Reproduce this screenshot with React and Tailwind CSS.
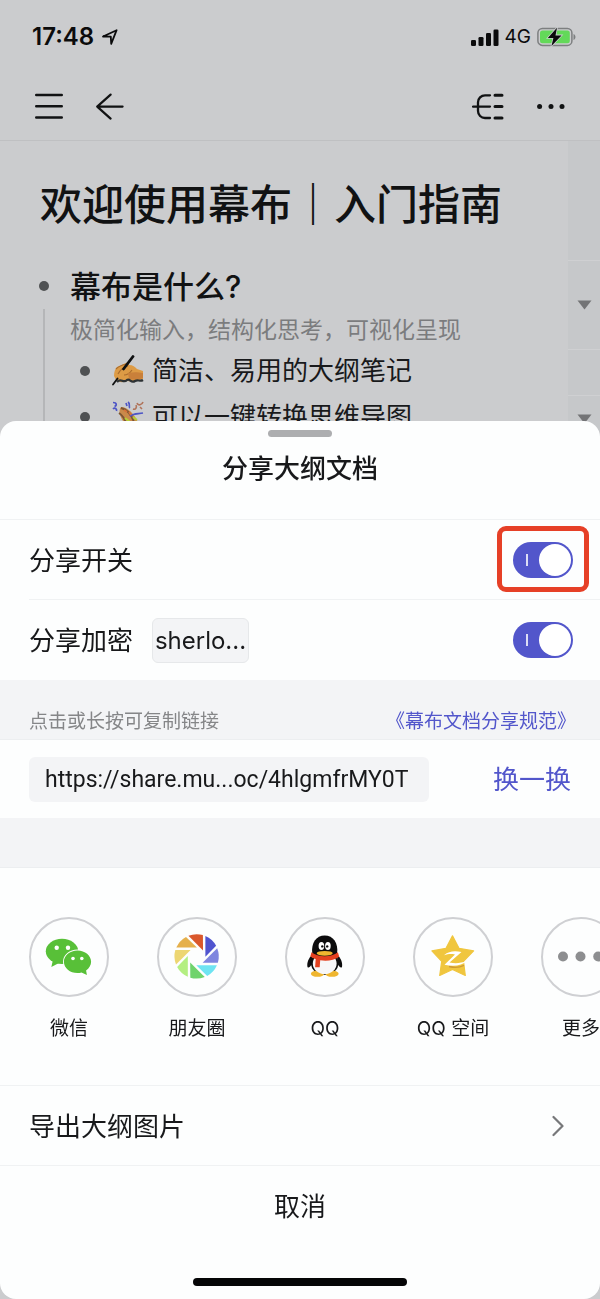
import React, { useState } from 'react';

const StatusBar = () => (
  <div className="flex h-[74px] items-center justify-between pl-8 pr-6">
    <div className="flex items-center gap-2">
      <span className="text-2xl font-semibold text-[#0b0b0c]">17:48</span>
      <svg className="h-4 w-4" viewBox="0 0 16 16" fill="none" stroke="#0b0b0c" strokeWidth="1.8" strokeLinejoin="round">
        <path d="M1 7.5 14.6 1.2 9.2 14.8 8.8 7.6Z" />
      </svg>
    </div>
    <div className="flex items-center gap-1.5">
      <svg className="h-[17px] w-7" viewBox="0 0 28 17" fill="#0b0b0c">
        <rect x="0" y="11" width="5" height="6" rx="1.3" />
        <rect x="7.5" y="8" width="5" height="9" rx="1.3" />
        <rect x="15" y="4" width="5" height="13" rx="1.3" />
        <rect x="22.5" y="0.5" width="5" height="16.5" rx="1.3" />
      </svg>
      <span className="text-[19px] leading-6 text-[#0b0b0c]">4G</span>
      <svg className="h-5 w-[39px]" viewBox="0 0 39 20">
        <rect x="0.9" y="1.4" width="34" height="17" rx="4.5" fill="none" stroke="#7d7f80" strokeWidth="1.5" />
        <rect x="3" y="3.5" width="29.8" height="12.8" rx="2.5" fill="#63d959" />
        <path d="M36.5 7v6c2.6-1 2.6-5 0-6Z" fill="#7d7f80" />
        <path d="M20 0.8 10.8 11h5.6L14.5 19 24.5 8.4h-6Z" fill="#0b0b0c" stroke="#cbccce" strokeWidth="1.6" paintOrder="stroke" />
      </svg>
    </div>
  </div>
);

const NavBar = () => (
  <header className="flex h-[67px] items-center justify-between border-b border-[#bfc0c2] pb-px pl-[34px] pr-[34px]">
    <div className="flex items-center gap-8">
      <button type="button" aria-label="菜单">
        <svg className="h-[30px] w-[30px]" viewBox="0 0 30 30" stroke="#111213" strokeWidth="2.4" strokeLinecap="round">
          <path d="M2.2 3h25.6M2.2 14.3h25.6M2.2 25.5h25.6" />
        </svg>
      </button>
      <button type="button" aria-label="返回">
        <svg className="h-[30px] w-[30px]" viewBox="0 0 30 30" fill="none" stroke="#111213" strokeWidth="2.2" strokeLinecap="round" strokeLinejoin="round">
          <path d="M26.6 14.6H1.2M14.6 2.6 1.2 14.6l13.4 12" />
        </svg>
      </button>
    </div>
    <div className="flex items-center gap-8">
      <button type="button" aria-label="思维导图">
        <svg className="h-[30px] w-8" viewBox="0 0 32 30" fill="none" stroke="#111213" strokeLinecap="round">
          <path d="M18 3.3H13A7 7 0 0 0 6 10.3V19a7 7 0 0 0 7 7h5M1 14.6h17" strokeWidth="2.3" />
          <path d="M23 3.3h7M23 14.6h7M23 26h7" strokeWidth="3" />
        </svg>
      </button>
      <button type="button" aria-label="更多操作">
        <svg className="h-[30px] w-[30px]" viewBox="0 0 30 30" fill="#111213">
          <circle cx="3.6" cy="14.6" r="2.5" />
          <circle cx="15" cy="14.6" r="2.5" />
          <circle cx="26" cy="14.6" r="2.5" />
        </svg>
      </button>
    </div>
  </header>
);

const WritingHand = () => (
  <svg className="h-8 w-8 shrink-0" viewBox="0 0 32 32">
    <path d="M2 21c0-4 1-7 3-9l9-4c2-1 3 0 3 2 4 0 6 2 8 4l6 2v8c-6 2-11 3-16 2-5 2-10 2-13-5Z" fill="#dd9b45" />
    <path d="M4 14c3-3 6-4 10-5M6 19c2-4 6-7 10-8M12 20c3 0 6-2 8-5" stroke="#a96b2d" strokeWidth="1.1" fill="none" />
    <path d="M16 18c5-1 9-1 15 0v5c-5 2-9 2-14 1Z" fill="#c9803a" />
    <path d="M5 27c4-5 6 2 10-2 3-2 4 4 8 1 3-2 5 1 8-1" stroke="#2c3134" strokeWidth="2.2" fill="none" />
    <path d="M21 1.5 11.5 14" stroke="#0f1011" strokeWidth="2.8" strokeLinecap="round" />
    <path d="M5.5 23.5 1 29.5" stroke="#0f1011" strokeWidth="1.8" strokeLinecap="round" />
  </svg>
);

const PartyPopper = () => (
  <svg className="h-8 w-8 shrink-0" viewBox="0 0 32 32" fill="none">
    <path d="M9 6c-3 4-1 9 2 14l-7 9 22-8c-4-8-10-15-17-15Z" fill="#c98a4a" />
    <path d="M9 7c5 1 10 6 13 14M7 12c3 2 6 6 7 11" stroke="#7b5533" strokeWidth="1.8" />
    <path d="M1 1.5c4 0 4 3 1.5 4M1 8c2-2 4 0 3.5 2M14 2l1 3M18 15c4-3 8-2 13-3M16 1c3 2 0 5 2 6" stroke="#4d55c6" strokeWidth="1.7" />
    <path d="M21 8c3 1 4-2 3-4M25 2c1 3 5 2 6-1M28 6l2 2" stroke="#b0735a" strokeWidth="1.6" />
    <path d="M13 17c2 2 4 2 5 5M21 16l4 3" stroke="#b4cf35" strokeWidth="2" />
    <path d="m12 9 3 2M17 11l2 3" stroke="#d7733a" strokeWidth="2" />
  </svg>
);

// right-hand gutter cell of an outline row
const Gutter = ({ collapsible }) => (
  <div className="flex w-8 shrink-0 items-center justify-center border-b border-[#cfd0d2] bg-[#c6c8ca]">
    {collapsible && (
      <button type="button" aria-label="折叠">
        <svg className="h-[10px] w-[15px]" viewBox="0 0 15 10" fill="#737476">
          <path d="M0.5 0.5h14L7.5 9.6Z" />
        </svg>
      </button>
    )}
  </div>
);

const OutlineChild = ({ icon, text, collapsible }) => (
  <li className="flex h-[46px]">
    <div className="ml-[34px] flex w-5 justify-center">
      <span className="w-0.5 bg-[#b5b6b8]" />
    </div>
    <div className="flex flex-1 items-center pb-1 pl-[26px]">
      <span className="mr-[22px] h-[10px] w-[10px] rounded-full bg-[#4f5153]" />
      {icon}
      <span className="ml-2 whitespace-nowrap text-[26px] leading-9 text-[#18191b]">{text}</span>
    </div>
    <Gutter collapsible={collapsible} />
  </li>
);

const Outline = () => (
  <article>
    <div className="flex h-[120px]">
      <div className="flex flex-1 items-center pl-10 pt-2">
        <h1 className="whitespace-nowrap text-[42px] font-medium leading-[60px] text-[#111213]">
          欢迎使用幕布<span className="font-bold">｜</span>入门指南
        </h1>
      </div>
      <Gutter />
    </div>
    <ul>
      <li>
        <div className="flex h-[89px]">
          <div className="ml-[34px] flex w-5 flex-col items-center">
            <span className="mb-[18px] mt-5 h-[10px] w-[10px] shrink-0 rounded-full bg-[#4f5153]" />
            <span className="w-0.5 flex-1 bg-[#b5b6b8]" />
          </div>
          <div className="flex-1 whitespace-nowrap pl-4 pt-1">
            <h2 className="text-[31px] font-medium leading-[44px] text-[#111213]">幕布是什么?</h2>
            <p className="text-[23px] leading-[42px] text-[#7b7c7e]">极简化输入，结构化思考，可视化呈现</p>
          </div>
          <Gutter collapsible />
        </div>
        <ul>
          <OutlineChild icon={<WritingHand />} text="简洁、易用的大纲笔记" />
          <OutlineChild icon={<PartyPopper />} text="可以一键转换思维导图" collapsible />
        </ul>
      </li>
    </ul>
  </article>
);

const Toggle = ({ id, checked, onChange, highlighted }) => (
  <span className="relative flex h-9 w-[60px] shrink-0">
    <input
      id={id}
      type="checkbox"
      role="switch"
      checked={checked}
      onChange={(e) => onChange(e.target.checked)}
      className="peer h-9 w-[60px] cursor-pointer appearance-none rounded-full bg-[#c8c9cc] checked:bg-[#5256cb]"
    />
    <span className="pointer-events-none absolute left-[13px] top-3 h-3 w-0.5 bg-white/80" />
    <span className="pointer-events-none absolute left-0.5 top-0.5 h-8 w-8 rounded-full bg-white peer-checked:left-[26px]" />
    {highlighted && (
      <span className="pointer-events-none absolute -inset-x-4 -bottom-[14px] -top-4 rounded-[9px] border-[5px] border-[#e64027]" />
    )}
  </span>
);

const WechatIcon = () => (
  <svg className="h-20 w-20 shrink-0" viewBox="0 0 80 80">
    <path d="M24 43 22.3 50 30 46Z" fill="#58c038" />
    <ellipse cx="33" cy="34.3" rx="16.2" ry="12.6" fill="#58c038" />
    <path
      d="M48.5 33.4c7.6 0 13.6 5.1 13.6 11.4 0 3.6-2 6.5-5 8.6l.8 4.6-5.4-2.4c-1.3.4-2.6.5-4 .5-7.6 0-13.6-5-13.6-11.3s6-11.4 13.6-11.4Z"
      fill="#58c038"
      stroke="#fff"
      strokeWidth="1.8"
      paintOrder="stroke"
    />
    <g fill="#fff">
      <circle cx="27.7" cy="30.7" r="2.2" />
      <circle cx="39" cy="30.7" r="2.2" />
      <circle cx="44" cy="41.5" r="1.8" />
      <circle cx="52.8" cy="41.5" r="1.8" />
    </g>
  </svg>
);

const blades = ['#5054cf', '#7f86df', '#6ee4f2', '#6fd36c', '#b4ef82', '#edd672', '#e5b04c', '#da582c'];

const MomentsIcon = () => (
  <svg className="h-20 w-20 shrink-0" viewBox="0 0 80 80">
    <g transform="translate(39.6 39.4)">
      {blades.map((color, i) => (
        <path key={color} d="M8.8 -20.3A22.1 22.1 0 0 1 19.5 -10.6L8.8 0.3Z" fill={color} transform={`rotate(${i * 45})`} />
      ))}
    </g>
  </svg>
);

const QQIcon = () => (
  <svg className="h-20 w-20 shrink-0" viewBox="0 0 80 80">
    <path d="M27.5 37.5C23.5 41 21.6 46 22.5 50c1 1.5 3-.5 4.5-3ZM52 37.5c4 3.5 5.9 8.5 5 12.5-1 1.5-3-.5-4.5-3Z" fill="#0c0c0d" />
    <ellipse cx="39.7" cy="46" rx="13.8" ry="12" fill="#0c0c0d" />
    <ellipse cx="32.5" cy="56.7" rx="6.6" ry="3.1" fill="#efb62f" />
    <ellipse cx="47" cy="56.7" rx="6.6" ry="3.1" fill="#efb62f" />
    <ellipse cx="39.7" cy="46.5" rx="11.9" ry="10.7" fill="#f7f7f8" />
    <path d="M27.3 37c-1.5-11 4-18.4 12.4-18.4S53.6 26 52.1 37c-3 5-21.8 5-24.8 0Z" fill="#0c0c0d" />
    <path d="M26.5 35.3c7 5.2 19.4 5.2 26.4 0l1.3 4.4c-5 3.7-12 4.6-19 3.6l-.5 7h-4.6l.6-8.2c-2-.6-3.8-1.5-5.4-2.6Z" fill="#e3401f" />
    <ellipse cx="36.4" cy="29" rx="2.8" ry="4.1" fill="#fff" />
    <ellipse cx="42.9" cy="29" rx="2.8" ry="4.1" fill="#fff" />
    <circle cx="37.3" cy="29.4" r="1.2" fill="#0c0c0d" />
    <circle cx="42.2" cy="29.4" r="1.2" fill="#0c0c0d" />
    <ellipse cx="39.7" cy="36.3" rx="8" ry="2.4" fill="#efb62f" />
  </svg>
);

const QZoneIcon = () => (
  <svg className="h-20 w-20 shrink-0" viewBox="0 0 80 80">
    <path
      d="M39.5 18.8 46 31.3 60.6 33.9 50.5 44.3 52.3 58.5 39.5 52.5 26.7 58.5 28.7 44.3 18.9 33.9 33 31.3Z"
      fill="#f0c63e"
      stroke="#f0c63e"
      strokeWidth="1.2"
      strokeLinejoin="round"
    />
    <path d="M36 49.5c6 1.5 11 .8 15-1.2" stroke="#cf9b35" strokeWidth="1.3" fill="none" />
    <path d="M31 38.2c5-4 10-4.6 17.5-3.2L36.5 45.6c6 1 11 .8 17.5-1.5-5 4.5-13 6-22.5 3.7L42 37.4c-4-.6-7-.4-11 .8Z" fill="#fff" />
  </svg>
);

const MoreIcon = () => (
  <svg className="h-20 w-20 shrink-0" viewBox="0 0 80 80" fill="#8d8e90">
    <circle cx="22" cy="39.5" r="5" />
    <circle cx="39.5" cy="39.5" r="5" />
    <circle cx="57.2" cy="39.5" r="5" />
  </svg>
);

const shareTargets = [
  { label: '微信', icon: <WechatIcon /> },
  { label: '朋友圈', icon: <MomentsIcon /> },
  { label: 'QQ', icon: <QQIcon /> },
  { label: 'QQ 空间', icon: <QZoneIcon /> },
  { label: '更多', icon: <MoreIcon /> },
];

const ShareSheet = () => {
  const [shared, setShared] = useState(true);
  const [encrypted, setEncrypted] = useState(true);

  return (
    <section className="fixed inset-x-0 bottom-0 max-h-full overflow-hidden rounded-2xl bg-[#fdfefe] text-[26px] leading-9 text-[#18191b]">
      <div className="border-b border-[#f0f2f3] pb-8 pt-[9px]">
        <div className="mx-auto h-[7px] w-16 rounded-full bg-[#adaeb0]" />
        <h2 className="mt-[14px] text-center font-medium">分享大纲文档</h2>
      </div>

      <div className="pl-[29px]">
        <div className="flex h-20 items-center justify-between border-b border-[#f0f2f3] pr-[27px]">
          <label htmlFor="share-switch" className="pt-0.5">分享开关</label>
          <Toggle id="share-switch" checked={shared} onChange={setShared} highlighted />
        </div>
        <div className="flex h-20 items-center justify-between pr-[27px]">
          <div className="flex items-center gap-[19px]">
            <label htmlFor="encrypt-switch" className="pt-0.5">分享加密</label>
            <input
              aria-label="分享密码"
              readOnly
              value="sherlo..."
              className="h-[45px] w-[97px] rounded-md border border-[#e6e8ea] bg-[#f3f4f6] text-center text-2xl outline-none"
            />
          </div>
          <Toggle id="encrypt-switch" checked={encrypted} onChange={setEncrypted} />
        </div>
      </div>

      <div className="flex h-[60px] items-end justify-between border-b border-[#eceef0] bg-[#f3f4f6] pb-[3px] pl-[29px] pr-6 text-[19px] leading-7">
        <label htmlFor="share-link" className="text-[#858688]">点击或长按可复制链接</label>
        <a href="#rules" className="text-[#5256cb]">《幕布文档分享规范》</a>
      </div>
      <div className="flex h-[78px] items-center gap-16 pl-[29px] pr-[29px]">
        <input
          id="share-link"
          readOnly
          value="https://share.mu...oc/4hlgmfrMY0T"
          className="h-[45px] min-w-0 flex-1 rounded-md bg-[#f3f4f6] px-4 font-['Roboto',sans-serif] text-[23px] outline-none"
        />
        <button type="button" className="pt-0.5 text-[#5256cb]">换一换</button>
      </div>

      <div className="h-[50px] border-b border-[#eceef0] bg-[#f3f4f6]" />

      <div className="flex h-[218px] gap-12 overflow-hidden border-b border-[#f0f2f3] pl-[29px] pt-[49px]">
        {shareTargets.map((target) => (
          <button key={target.label} type="button" className="flex w-20 shrink-0 flex-col items-center gap-[18px]">
            <span className="flex h-20 w-20 items-center justify-center rounded-full border-2 border-[#cfd0d3]">
              {target.icon}
            </span>
            <span className="whitespace-nowrap text-[19px] leading-7">{target.label}</span>
          </button>
        ))}
      </div>

      <button type="button" className="flex h-20 w-full items-center justify-between border-b border-[#f0f2f3] pl-[29px] pr-9">
        <span className="pt-0.5">导出大纲图片</span>
        <svg className="h-6 w-3" viewBox="0 0 12 24" fill="none" stroke="#77787a" strokeWidth="2.2" strokeLinecap="round" strokeLinejoin="round">
          <path d="M1.5 3 10.5 12 1.5 21" />
        </svg>
      </button>
      <button type="button" className="h-20 w-full pt-0.5 text-center">取消</button>
      <div className="flex h-[53px] items-end justify-center pb-[13px]">
        <span className="h-2 w-[214px] rounded-full bg-[#050506]" />
      </div>
    </section>
  );
};

const App = () => (
  <main className="min-h-screen overflow-hidden bg-[#cbccce] font-['Inter','Noto_Sans_CJK_SC',sans-serif]">
    <StatusBar />
    <NavBar />
    <Outline />
    <ShareSheet />
  </main>
);

export default App;
